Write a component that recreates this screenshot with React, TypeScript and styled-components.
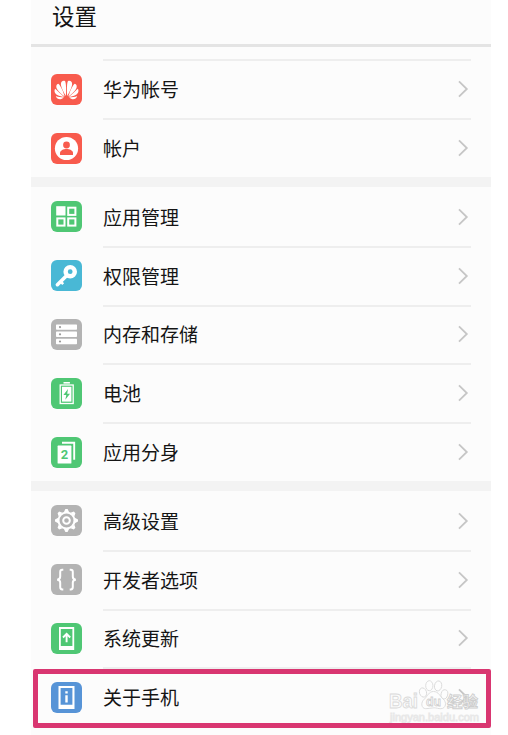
import React from "react";
import styled, { createGlobalStyle } from "styled-components";

const GlobalStyle = createGlobalStyle`
  * { box-sizing: border-box; }
  html, body { margin: 0; background: #fff; overflow: hidden; }
`;

const Screen = styled.main`
  position: relative;
  width: 460px;
  height: 735px;
  margin-left: 31px;
  overflow: hidden;
  background: #fcfcfc;
  color: #151515;
  font-family: "Noto Sans CJK SC", sans-serif;
`;

const Header = styled.header`
  height: 47px;
  padding: 0 0 0 21px;
  border-bottom: 3px solid #e4e4e4;
`;

const Title = styled.h1`
  margin: 0;
  font-size: 22.5px;
  font-weight: 400;
  line-height: 31px;
`;

const Content = styled.div`
  padding-top: 12.4px;
`;

const Group = styled.section`
  & + & {
    border-top: 10px solid #f3f3f3;
  }
`;

const Row = styled.div<{ $line: boolean }>`
  display: flex;
  align-items: center;
  height: 58.8px;
  padding: 1px 20px 0;
  background: ${({ $line }) =>
    $line ? "linear-gradient(#eeeeee, #eeeeee) 72px 0 / 368px 2px no-repeat" : "none"};
`;

const Tile = styled.svg`
  flex: none;
  width: 31px;
  height: 31px;
`;

const Label = styled.span`
  flex: 1;
  margin-left: 21px;
  font-size: 19px;
  line-height: 28px;
  white-space: nowrap;
`;

const Chevron = styled.svg`
  flex: none;
  width: 12px;
  height: 18px;
  margin-right: 2px;
`;

const Highlight = styled.div`
  position: absolute;
  left: 2px;
  top: 669px;
  width: 458px;
  height: 59px;
  border: 5px solid #d93671;
  border-radius: 2px;
`;

const Watermark = styled.svg`
  position: absolute;
  left: 355px;
  top: 677px;
  width: 100px;
  height: 48px;
`;

type IconName =
  | "huawei" | "account" | "apps" | "key" | "storage" | "battery"
  | "clone" | "gear" | "braces" | "update" | "about";

const RED = "#f85b4d";
const GREEN = "#4fc774";
const GRAY = "#b3b3b3";

const tileColor: Record<IconName, string> = {
  huawei: RED, account: RED, apps: GREEN, key: "#49b8d5", storage: GRAY,
  battery: GREEN, clone: GREEN, gear: GRAY, braces: GRAY, update: GREEN, about: "#5794d7",
};

const gearTeeth = [0, 45, 90, 135, 180, 225, 270, 315];

const glyphs: Record<IconName, React.ReactNode> = {
  huawei: (
    <g fill="#fff">
      {[1, -1].map((side) => (
        <g key={side} transform={`translate(15.5 .4) scale(${side} 1)`}>
          <path d="M.6 21.6C.3 16 .3 9.5 1.3 6.9 3.4 5.6 5.8 7.2 5.6 10 5.3 13.4 2.4 18.5.6 21.6Z" />
          <path d="M1.8 22.1C3.3 17.6 5.4 11.9 8.1 9.4 10.4 9.7 10.8 12.6 9.4 14.8 7.6 17.6 4.6 20.1 1.8 22.1Z" />
          <path d="M2.4 22.6C5 20.2 8.7 16.9 11.3 14.4 12.8 16.6 11.6 19.4 9.2 20.6 7.1 21.6 4.4 22.3 2.4 22.6Z" />
          <path d="M2.5 23.2C5.2 22.9 8.4 22.6 10.7 21.6 9.9 24.4 7.3 25.3 5.2 24.6 4.1 24.2 3.3 23.7 2.5 23.2Z" />
        </g>
      ))}
    </g>
  ),
  account: (
    <>
      <circle cx="15.5" cy="15.5" r="11.6" fill="#fff" />
      <circle cx="15.5" cy="12" r="3.4" fill={RED} />
      <path d="M9 21.9V20C9 17.5 12.5 16 15.5 16s6.5 1.5 6.5 4v1.9Z" fill={RED} />
    </>
  ),
  apps: (
    <>
      <rect x="5.2" y="5.2" width="9.3" height="9.3" fill="#fff" />
      <g fill="none" stroke="#fff" strokeWidth="2">
        <rect x="17.2" y="6.7" width="7.2" height="7.2" />
        <rect x="6.3" y="17.4" width="7.2" height="7.2" />
        <rect x="17.2" y="17.4" width="7.2" height="7.2" />
      </g>
    </>
  ),
  key: (
    <g fill="none" stroke="#fff">
      <circle cx="19.2" cy="11.7" r="4.6" strokeWidth="4.4" />
      <path d="M15.5 15.7 6.4 24.7" strokeWidth="3.6" strokeLinecap="round" />
      <path d="m9.6 21.5 2.6 2.6" strokeWidth="2.6" />
    </g>
  ),
  storage: (
    <>
      {[5.4, 12.6, 19.8].map((y) => (
        <g key={y}>
          <rect x="5" y={y} width="21" height="5.4" rx=".7" fill="#fff" />
          <circle cx="9" cy={y + 2.7} r="1.1" fill="#999" />
        </g>
      ))}
    </>
  ),
  battery: (
    <>
      <rect x="12.5" y="4" width="6.4" height="1.6" fill="#fff" />
      <rect x="9.2" y="7" width="13" height="18.5" fill="none" stroke="#fff" strokeWidth="1.3" />
      <rect x="11" y="8.8" width="9.4" height="14.8" fill="#fff" />
      <path d="m17 11-4.6 6h2.9l-1 4.7 4.7-6h-2.8Z" fill={GREEN} />
    </>
  ),
  clone: (
    <>
      <path d="M11 5.7h12.2v17" fill="none" stroke="#fff" strokeWidth="1.9" />
      <rect x="6.6" y="8.6" width="13.8" height="18" rx=".6" fill="#fff" />
      <text x="13.4" y="22.4" textAnchor="middle" fill={GREEN} fontFamily="Roboto, sans-serif" fontWeight="700" fontSize="13">2</text>
    </>
  ),
  gear: (
    <g fill="none" stroke="#fff">
      <circle cx="15.5" cy="15.5" r="8" strokeWidth="2" />
      <circle cx="15.5" cy="15.5" r="3.3" strokeWidth="2" />
      {gearTeeth.map((a) => (
        <path key={a} d="m12.8 7.2 1.6-3.2h2.2l1.6 3.2Z" fill="#fff" stroke="none" transform={`rotate(${a} 15.5 15.5)`} />
      ))}
    </g>
  ),
  braces: (
    <g fill="none" stroke="#fff" strokeWidth="2">
      <path d="M12.3 5.7h-1.1Q9.2 5.7 9.2 8v4.6Q9.2 15.4 6.2 15.7 9.2 16 9.2 18.6V23q0 2.4 2 2.4h1.1" />
      <path d="M18.7 5.7h1.1Q21.8 5.7 21.8 8v4.6q0 2.8 3 3.1-3 .3-3 2.9V23q0 2.4-2 2.4h-1.1" />
    </g>
  ),
  update: (
    <>
      <path fillRule="evenodd" fill="#fff" d="M8 4h15.2v23H8Zm1.8 2v16.9h11.6V6Z" />
      <path d="M15.6 19.3v-8M12 14.5l3.6-3.6 3.6 3.6" fill="none" stroke="#fff" strokeWidth="1.9" />
    </>
  ),
  about: (
    <>
      <path fillRule="evenodd" fill="#fff" d="M7.5 4h16v23h-16Zm2.1 2.1v16.7h11.8V6.1Z" />
      <path d="M14.3 9.3h2.4v2.3h-2.4Zm0 4h2.4v7.2h-2.4Z" fill="#fff" />
    </>
  ),
};

const groups: { icon: IconName; label: string }[][] = [
  [
    { icon: "huawei", label: "华为帐号" },
    { icon: "account", label: "帐户" },
  ],
  [
    { icon: "apps", label: "应用管理" },
    { icon: "key", label: "权限管理" },
    { icon: "storage", label: "内存和存储" },
    { icon: "battery", label: "电池" },
    { icon: "clone", label: "应用分身" },
  ],
  [
    { icon: "gear", label: "高级设置" },
    { icon: "braces", label: "开发者选项" },
    { icon: "update", label: "系统更新" },
    { icon: "about", label: "关于手机" },
  ],
];

function BaiduMark() {
  return (
    <Watermark viewBox="0 0 100 48">
      <g fill="#fdfdfd" fillOpacity=".75" stroke="#dadada" strokeWidth=".9">
        <ellipse cx="37" cy="15.5" rx="3.5" ry="4.7" transform="rotate(-18 37 15.5)" />
        <ellipse cx="43.3" cy="8.7" rx="3.6" ry="5" />
        <ellipse cx="52.1" cy="8.9" rx="3.6" ry="5" transform="rotate(10 52.1 8.9)" />
        <ellipse cx="58.4" cy="17.3" rx="3.3" ry="4.6" transform="rotate(14 58.4 17.3)" />
        <path d="M47.5 14.5c-4.6 0-6 4.6-9 7.5-4 3.1-3.5 9.6 1.3 9.7 3.1.1 5-.9 8.1-.9 3 0 4.1 1 7 .9 5-.1 6.2-6.5 2.2-9.7-3.2-2.5-4.3-7.5-9.6-7.5Z" />
        <g fontFamily="Liberation Sans, sans-serif" fontWeight="700">
          <text x="3" y="31" fontSize="20.5" textLength="29" lengthAdjust="spacingAndGlyphs">Bai</text>
          <text x="40" y="28.5" fontSize="12.5" textLength="15" lengthAdjust="spacingAndGlyphs" strokeWidth=".8" stroke="#d0d0d0">du</text>
        </g>
        <text x="61" y="29.8" fontSize="15.2" fontFamily="Noto Sans CJK SC, sans-serif" fontWeight="700" textLength="31" lengthAdjust="spacingAndGlyphs" strokeWidth=".9" stroke="#cecece">经验</text>
        <text x="4" y="43.5" fontSize="10" fontFamily="Liberation Sans, sans-serif" textLength="89" lengthAdjust="spacingAndGlyphs" fill="#fafafa" strokeWidth=".8" stroke="#e8e8e8">jingyan.baidu.com</text>
      </g>
    </Watermark>
  );
}

export default function App() {
  return (
    <>
      <GlobalStyle />
      <Screen>
        <Header>
          <Title>设置</Title>
        </Header>
        <Content>
          {groups.map((rows, g) => (
            <Group key={g}>
              {rows.map(({ icon, label }, i) => (
                <Row key={icon} $line={g === 0 || i > 0}>
                  <Tile viewBox="0 0 31 31">
                    <rect width="31" height="31" rx="6" fill={tileColor[icon]} />
                    {glyphs[icon]}
                  </Tile>
                  <Label>{label}</Label>
                  <Chevron viewBox="0 0 12 18">
                    <path d="m2 1.4 7.8 7.6L2 16.6" fill="none" stroke="#c6c6c6" strokeWidth="1.8" />
                  </Chevron>
                </Row>
              ))}
            </Group>
          ))}
        </Content>
        <BaiduMark />
        <Highlight />
      </Screen>
    </>
  );
}
